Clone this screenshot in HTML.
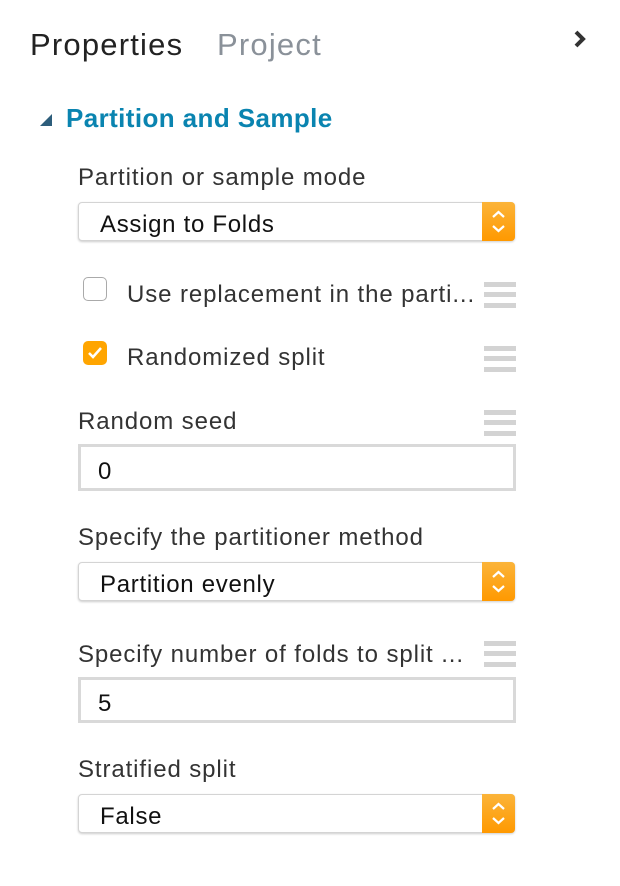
<!DOCTYPE html>
<html><head><style>
body{margin:0;width:620px;height:886px;background:#fff;font-family:"Liberation Sans",sans-serif;position:relative;overflow:hidden;color:#333}
.a{position:absolute;white-space:nowrap}
.lbl{font-size:24px;line-height:28px;color:#333;letter-spacing:0.9px}
.sel{position:absolute;left:78px;width:437px;height:39px;border:1px solid #d4d4d4;border-radius:4px;box-sizing:border-box;box-shadow:0 1px 2px rgba(0,0,0,.2);background:#fff}
.sel span{position:absolute;left:21px;top:8px;font-size:24px;color:#111;letter-spacing:0.7px}
.sel i{position:absolute;right:-1px;top:-1px;width:33px;height:39px;background:linear-gradient(#fbb43a,#ff9900);border-radius:0 4px 4px 0}
.inp{position:absolute;left:78px;width:438px;border:3px solid #d9d9d9;box-sizing:border-box;background:#fff}
.inp span{position:absolute;left:17px;font-size:24px;color:#111}
.hb{position:absolute;left:484px;width:32px;height:26px}
.hb b{position:absolute;left:0;width:32px;height:5px;background:#d3d3d3}
.cb{position:absolute;left:83px;width:24px;height:24px;border-radius:5px;box-sizing:border-box}
</style></head><body>
<div class="a" style="left:30px;top:27px;font-size:31px;color:#222;letter-spacing:1.2px">Properties</div>
<div class="a" style="left:217px;top:27px;font-size:31px;color:#8a9199;letter-spacing:1.2px">Project</div>
<svg class="a" style="left:572px;top:30px" width="16" height="18"><path d="M4 2 L11 9 L4 16" stroke="#333" stroke-width="4" fill="none"/></svg>
<svg class="a" style="left:38px;top:112px" width="16" height="16"><path d="M2 14 L14 14 L14 2 Z" fill="#2d5d7b"/></svg>
<div class="a" style="left:66px;top:103px;font-size:26px;font-weight:bold;color:#0a84b0;letter-spacing:0.4px">Partition and Sample</div>

<div class="a lbl" style="left:78px;top:164px">Partition or sample mode</div>
<div class="sel" style="top:202px"><span>Assign to Folds</span><i><svg width="33" height="39"><path d="M11 15 L16.5 10 L22 15 M11 24 L16.5 29 L22 24" stroke="#fff" stroke-width="2.2" fill="none"/></svg></i></div>

<div class="cb" style="top:277px;border:1.5px solid #aaa"></div>
<div class="a lbl" style="left:127px;top:281px">Use replacement in the parti...</div>
<div class="hb" style="top:282px"><b style="top:0"></b><b style="top:10px"></b><b style="top:21px"></b></div>

<div class="cb" style="top:341px;background:#ffa500"><svg width="24" height="24"><path d="M6 12 L10 16 L18 7" stroke="#fff" stroke-width="2.5" fill="none"/></svg></div>
<div class="a lbl" style="left:127px;top:344px">Randomized split</div>
<div class="hb" style="top:346px"><b style="top:0"></b><b style="top:10px"></b><b style="top:21px"></b></div>

<div class="a lbl" style="left:78px;top:408px">Random seed</div>
<div class="hb" style="top:410px"><b style="top:0"></b><b style="top:10px"></b><b style="top:21px"></b></div>
<div class="inp" style="top:444px;height:47px"><span style="top:11px">0</span></div>

<div class="a lbl" style="left:78px;top:524px">Specify the partitioner method</div>
<div class="sel" style="top:562px"><span>Partition evenly</span><i><svg width="33" height="39"><path d="M11 15 L16.5 10 L22 15 M11 24 L16.5 29 L22 24" stroke="#fff" stroke-width="2.2" fill="none"/></svg></i></div>

<div class="a lbl" style="left:78px;top:641px">Specify number of folds to split ...</div>
<div class="hb" style="top:641px"><b style="top:0"></b><b style="top:10px"></b><b style="top:21px"></b></div>
<div class="inp" style="top:677px;height:46px"><span style="top:10px">5</span></div>

<div class="a lbl" style="left:78px;top:756px">Stratified split</div>
<div class="sel" style="top:794px"><span>False</span><i><svg width="33" height="39"><path d="M11 15 L16.5 10 L22 15 M11 24 L16.5 29 L22 24" stroke="#fff" stroke-width="2.2" fill="none"/></svg></i></div>
</body></html>
